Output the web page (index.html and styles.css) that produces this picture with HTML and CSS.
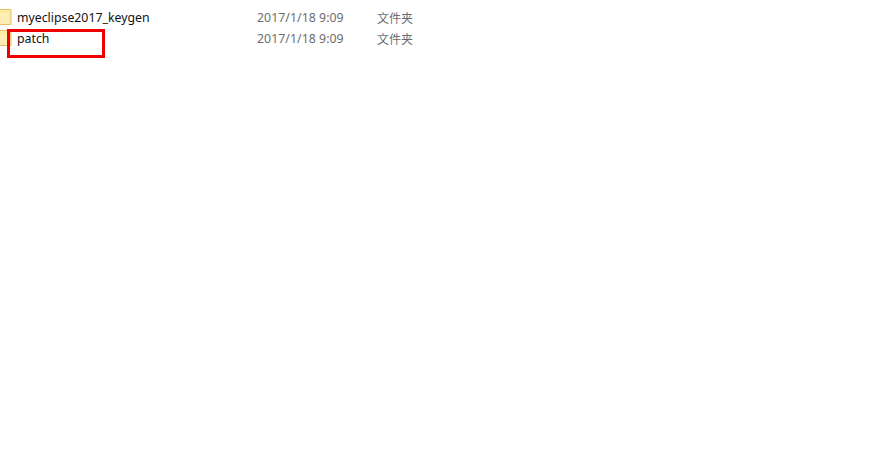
FILE: index.html
```html
<!DOCTYPE html>
<html lang="zh-CN">
<head>
    <meta charset="UTF-8">
    <meta name="viewport" content="width=device-width, initial-scale=1.0">
    <title>patch</title>
    <link rel="stylesheet" href="styles.css">
</head>
<body>
    <div class="file-list">
        <div class="file-row">
            <svg class="folder-icon" viewBox="0 0 12 16"><path d="M-2 .5H11V15.5H-2Z" fill="#fde9a0" stroke="#e5c365"/><path d="M-2 4H9V15H-2Z" fill="#fdeeb5"/></svg>
            <span class="file-name">myeclipse2017_keygen</span>
            <span class="file-date">2017/1/18 9:09</span>
            <span class="file-type">文件夹</span>
        </div>
        <div class="file-row">
            <svg class="folder-icon" viewBox="0 0 12 16"><path d="M-2 .5H11V15.5H-2Z" fill="#fde9a0" stroke="#e5c365"/><path d="M-2 4H9V15H-2Z" fill="#fdeeb5"/></svg>
            <span class="file-name">patch</span>
            <span class="file-date">2017/1/18 9:09</span>
            <span class="file-type">文件夹</span>
        </div>
    </div>
    <div class="highlight-box"></div>
</body>
</html>
```

FILE: styles.css
```css
body {
    margin: 0;
    height: 458px;
    background-color: #ffffff;
    font-family: "Noto Sans", "Noto Sans CJK SC", sans-serif;
    font-size: 12.3px;
    overflow: hidden;
    position: relative;
}
.file-list {
    padding-top: 7px;
}
.file-row {
    display: flex;
    align-items: center;
    height: 21px;
}
.folder-icon {
    width: 12px;
    height: 16px;
    margin-right: 5px;
    margin-bottom: 2px;
    flex-shrink: 0;
}
.file-name {
    width: 240px;
    color: #111111;
}
.file-date {
    width: 120px;
    color: #6d6d6d;
    letter-spacing: 0.05px;
}
.file-type {
    font-size: 12px;
    color: #6d6d6d;
}
.highlight-box {
    position: absolute;
    left: 7px;
    top: 29px;
    width: 92px;
    height: 23px;
    border: 3px solid #ee0000;
}
```
